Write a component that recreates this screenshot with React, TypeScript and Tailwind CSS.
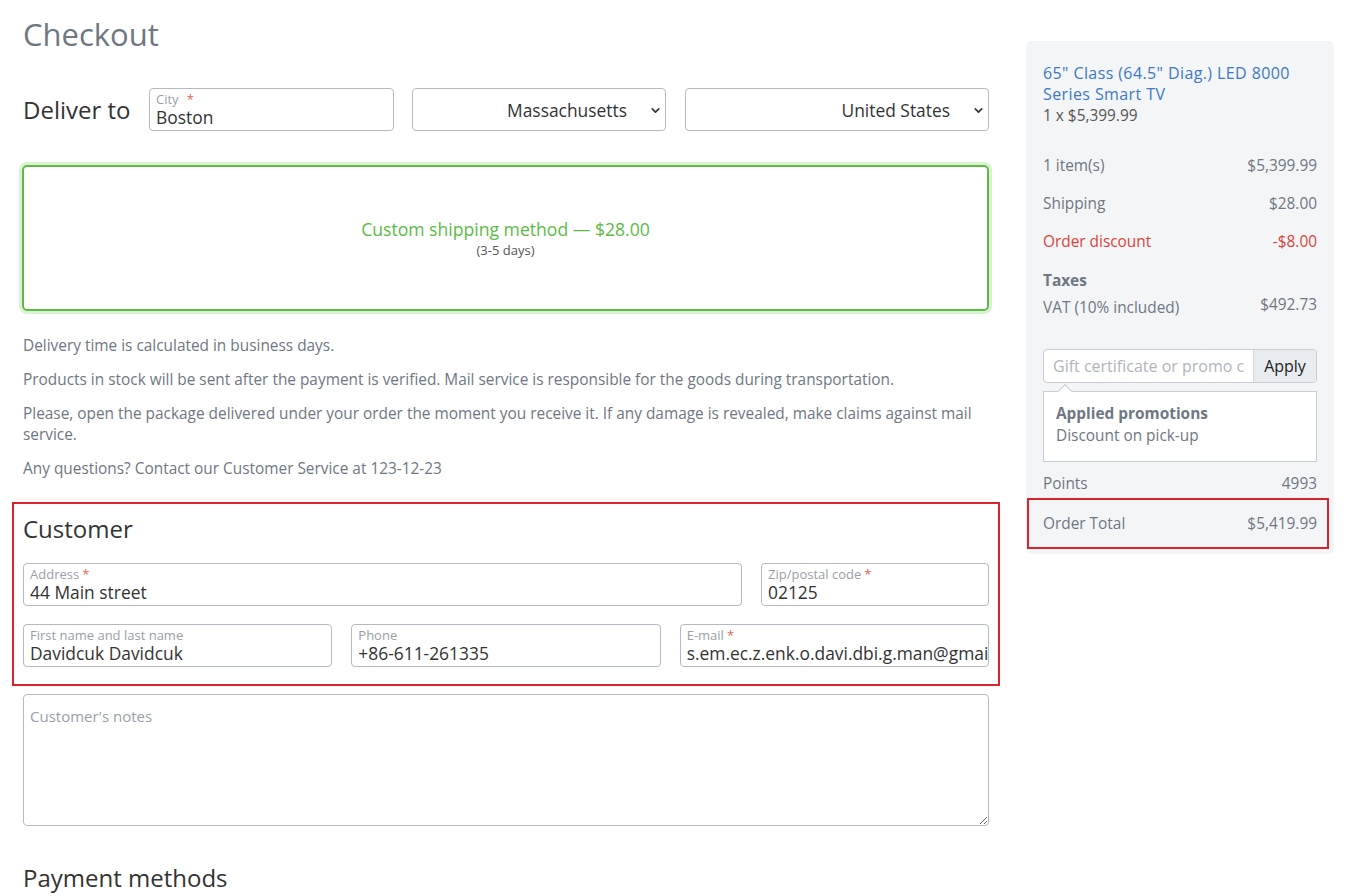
import { ChevronDown } from 'lucide-react';

interface FieldProps {
  label: string;
  value: string;
  required?: boolean;
  starGap?: string;
  className?: string;
}

function FloatField({ label, value, required, starGap = 'ml-[3px]', className }: FieldProps) {
  return (
    <div className={`h-[43px] rounded-[4px] border border-[#b3bac3] bg-white px-[6px] pt-[3px] overflow-hidden ${className ?? ''}`}>
      <div className="text-[13px] leading-[15px] text-[#9aa0a6]">
        {label}
        {required && <span className={`${starGap} text-[#e0645a]`}>*</span>}
      </div>
      <div className="text-[17.4px] leading-[21px] text-[#333] whitespace-nowrap">{value}</div>
    </div>
  );
}

function SelectBox({ value, className }: { value: string; className?: string }) {
  return (
    <div className={`h-[43px] rounded-[4px] border border-[#b3bac3] bg-white flex items-center justify-end pr-[3px] pt-[1px] ${className ?? ''}`}>
      <span className="text-[17.4px] text-[#333]">{value}</span>
      <ChevronDown size={13} strokeWidth={3} className="ml-[22px] text-[#333]" />
    </div>
  );
}

function SummaryRow({ label, value, tone = 'text-[#6f7782]' }: { label: string; value: string; tone?: string }) {
  return (
    <div className={`flex justify-between text-[15.4px] leading-[21px] ${tone}`}>
      <span>{label}</span>
      <span>{value}</span>
    </div>
  );
}

export default function App() {
  return (
    <div className="min-h-[896px] bg-white font-['Open_Sans',sans-serif] flex gap-[37px] pl-[23px] pr-[25px]">
      {/* main column */}
      <div className="w-[966px] shrink-0">
        <h1 className="text-[31px] leading-[40px] pt-[14px] text-[#6f7782]">Checkout</h1>

        <div className="mt-[34px] flex items-center">
          <div className="w-[126px] text-[24px] text-[#333] pt-[1px]">Deliver to</div>
          <FloatField label="City" value="Boston" required starGap="ml-[8px]" className="w-[245px]" />
          <SelectBox value="Massachusetts" className="w-[254px] ml-[18px]" />
          <SelectBox value="United States" className="w-[304px] ml-[19px]" />
        </div>

        <div className="mt-[34px] -ml-px h-[146px] rounded-[5px] border-2 border-[#5cbb45] shadow-[0_0_0_3px_#d9f2d2] flex flex-col items-center justify-center">
          <div className="text-[17.6px] leading-[24px] text-[#5cbb45]">Custom shipping method — $28.00</div>
          <div className="text-[13px] leading-[18px] text-[#555]">(3-5 days)</div>
        </div>

        <div className="mt-[24px] text-[15.4px] leading-[21px] text-[#6f7782] space-y-[13px]">
          <p>Delivery time is calculated in business days.</p>
          <p>Products in stock will be sent after the payment is verified. Mail service is responsible for the goods during transportation.</p>
          <p>Please, open the package delivered under your order the moment you receive it. If any damage is revealed, make claims against mail service.</p>
          <p>Any questions? Contact our Customer Service at 123-12-23</p>
        </div>

        <div className="mt-[23px] -mx-[11px] border-2 border-[#d9232d] px-[9px] pt-[9px] pb-[17px]">
          <h2 className="text-[24px] leading-[32px] text-[#333]">Customer</h2>
          <div className="mt-[18px] flex gap-[19px]">
            <FloatField label="Address" value="44 Main street" required className="flex-1" />
            <FloatField label="Zip/postal code" value="02125" required className="w-[228px]" />
          </div>
          <div className="mt-[18px] grid grid-cols-3 gap-[19px]">
            <FloatField label="First name and last name" value="Davidcuk Davidcuk" />
            <FloatField label="Phone" value="+86-611-261335" />
            <FloatField label="E-mail" value="s.em.ec.z.enk.o.davi.dbi.g.man@gmail.com" required />
          </div>
        </div>

        <textarea
          placeholder="Customer's notes"
          className="mt-[8px] block w-full h-[132px] rounded-[4px] border border-[#b3bac3] px-[6px] py-[10px] text-[15px] text-[#333] placeholder:text-[#9aa0a6] outline-none"
        />

        <h2 className="mt-[36px] text-[24px] leading-[32px] text-[#333]">Payment methods</h2>
      </div>

      {/* order summary */}
      <div className="mt-[41px] w-[308px] shrink-0 self-start rounded-[5px] bg-[#f4f5f7] pt-[22px] pb-[5px]">
        <div className="px-[17px]">
          <div className="text-[16px] tracking-[0.4px] leading-[21px] text-[#3d79c4]">65" Class (64.5" Diag.) LED 8000 Series Smart TV</div>
          <div className="text-[15.4px] leading-[21px] text-[#555]">1 x $5,399.99</div>

          <div className="mt-[29px] flex flex-col gap-[18px]">
            <SummaryRow label="1 item(s)" value="$5,399.99" />
            <div className="-mt-px">
              <SummaryRow label="Shipping" value="$28.00" />
            </div>
            <div className="-mt-px">
              <SummaryRow label="Order discount" value="-$8.00" tone="text-[#d9433b]" />
            </div>
          </div>

          <div className="mt-[19px] text-[15.4px] leading-[20px] font-bold text-[#6f7782]">Taxes</div>
          <div className="mt-[7px] flex justify-between text-[15.4px] text-[#6f7782]">
            <span className="leading-[20px]">VAT (10% included)</span>
            <span className="leading-[20px] -mt-[3px]">$492.73</span>
          </div>

          <div className="mt-[31px] flex h-[34px] rounded-[4px] border border-[#c8cdd3] bg-white overflow-hidden">
            <input
              placeholder="Gift certificate or promo code"
              className="min-w-0 flex-1 px-[9px] text-[16px] text-[#333] placeholder:text-[#b0b5ba] outline-none"
            />
            <button className="w-[63px] border-l border-[#d5d9de] bg-[#e9ecef] text-[16px] text-[#222]">Apply</button>
          </div>

          <div className="relative mt-[8px] border border-[#c8cdd3] bg-white px-[12px] pt-[11px] pb-[14px]">
            <div className="absolute -top-[6px] left-[16px] h-[10px] w-[10px] rotate-45 border-l border-t border-[#c8cdd3] bg-white" />
            <div className="text-[15.4px] leading-[21px] font-bold text-[#6f7782]">Applied promotions</div>
            <div className="text-[15.4px] leading-[23px] text-[#6f7782]">Discount on pick-up</div>
          </div>

          <div className="mt-[11px]">
            <SummaryRow label="Points" value="4993" />
          </div>
        </div>

        <div className="mt-[4px] ml-px mr-[5px] border-2 border-[#d9232d] pl-[14px] pr-[10px] py-[13px]">
          <div className="flex justify-between text-[15.4px] leading-[21px] text-[#6f7782]">
            <span>Order Total</span>
            <span>$5,419.99</span>
          </div>
        </div>
      </div>
    </div>
  );
}
